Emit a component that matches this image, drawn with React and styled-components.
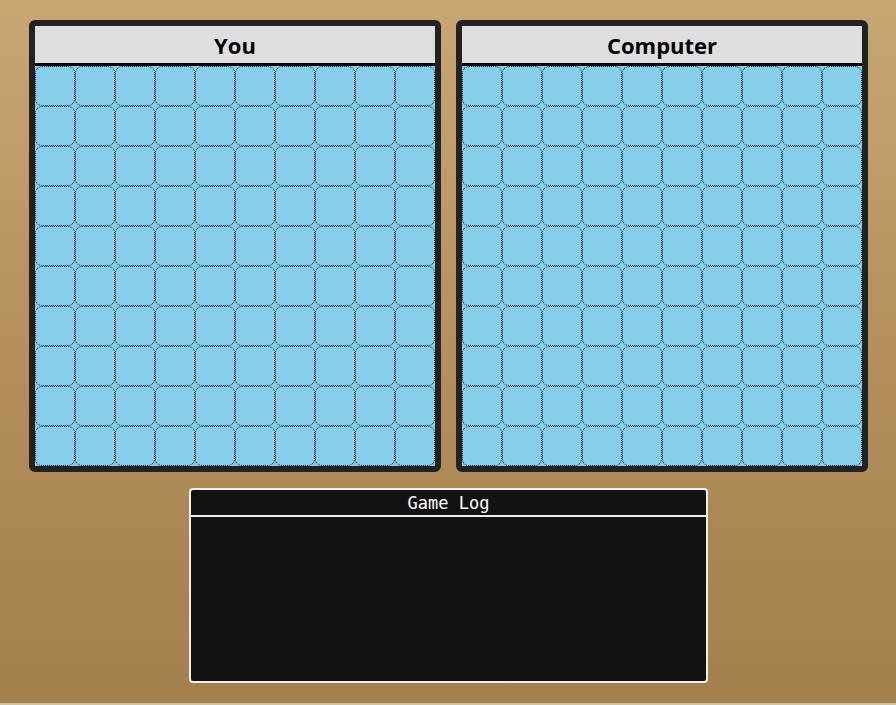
import React from 'react';
import styled, { createGlobalStyle } from 'styled-components';

const GlobalStyle = createGlobalStyle`
    html {
        background: #cdc4a2;
    }
    body {
        margin: 0;
        font-family: "Open Sans", "Noto Sans", sans-serif;
    }
`;

const SIZE = 10;
const cells = Array.from({ length: SIZE * SIZE }, (_, i) => i);

function Board(props) {
    return (
        <BoardWrapper>
            <BoardHeader>{props.title}</BoardHeader>
            <Grid>
                {cells.map(i => <Cell key={i} />)}
            </Grid>
        </BoardWrapper>
    );
}

export default function App() {
    return (
        <Page>
            <GlobalStyle />
            <BoardsRow>
                <Board title="You" />
                <Board title="Computer" />
            </BoardsRow>
            <GameLog>
                <LogHeader>Game Log</LogHeader>
                <LogBody />
            </GameLog>
        </Page>
    );
}

const Page = styled.div`
    height: 703px;
    box-sizing: border-box;
    padding-top: 20px;
    display: flex;
    flex-direction: column;
    align-items: center;
    background: linear-gradient(to bottom, #c8a775 0%, #b58f5e 50%, #a37f4e 100%);
`;

const BoardsRow = styled.div`
    display: flex;
    gap: 15px;
    margin-left: 1px;
`;

const BoardWrapper = styled.div`
    width: 400px;
    border: 6px solid #222;
    border-radius: 6px;
    background: #222;
    overflow: hidden;
`;

const BoardHeader = styled.div`
    height: 37px;
    background: #dedede;
    border-bottom: 3px solid #000;
    display: flex;
    align-items: center;
    justify-content: center;
    font-size: 22px;
    font-weight: 700;
    color: #000;
`;

const Grid = styled.div`
    display: grid;
    grid-template-columns: repeat(10, 40px);
    grid-auto-rows: 40px;
    background: #87ceeb;
`;

const Cell = styled.div`
    box-sizing: border-box;
    background: #87ceeb;
    border: 1px dotted #102030;
    border-radius: 7px;
`;

const GameLog = styled.div`
    margin-top: 16px;
    margin-left: 1px;
    width: 519px;
    height: 195px;
    box-sizing: border-box;
    background: #121212;
    border: 2px solid #eeeeee;
    border-radius: 4px;
    display: flex;
    flex-direction: column;
`;

const LogHeader = styled.div`
    height: 25px;
    border-bottom: 2px solid #eeeeee;
    display: flex;
    align-items: center;
    justify-content: center;
    color: #ffffff;
    font-family: "DejaVu Sans Mono", "Liberation Mono", monospace;
    font-size: 17px;
`;

const LogBody = styled.div`
    flex: 1;
    overflow: auto;
`;
